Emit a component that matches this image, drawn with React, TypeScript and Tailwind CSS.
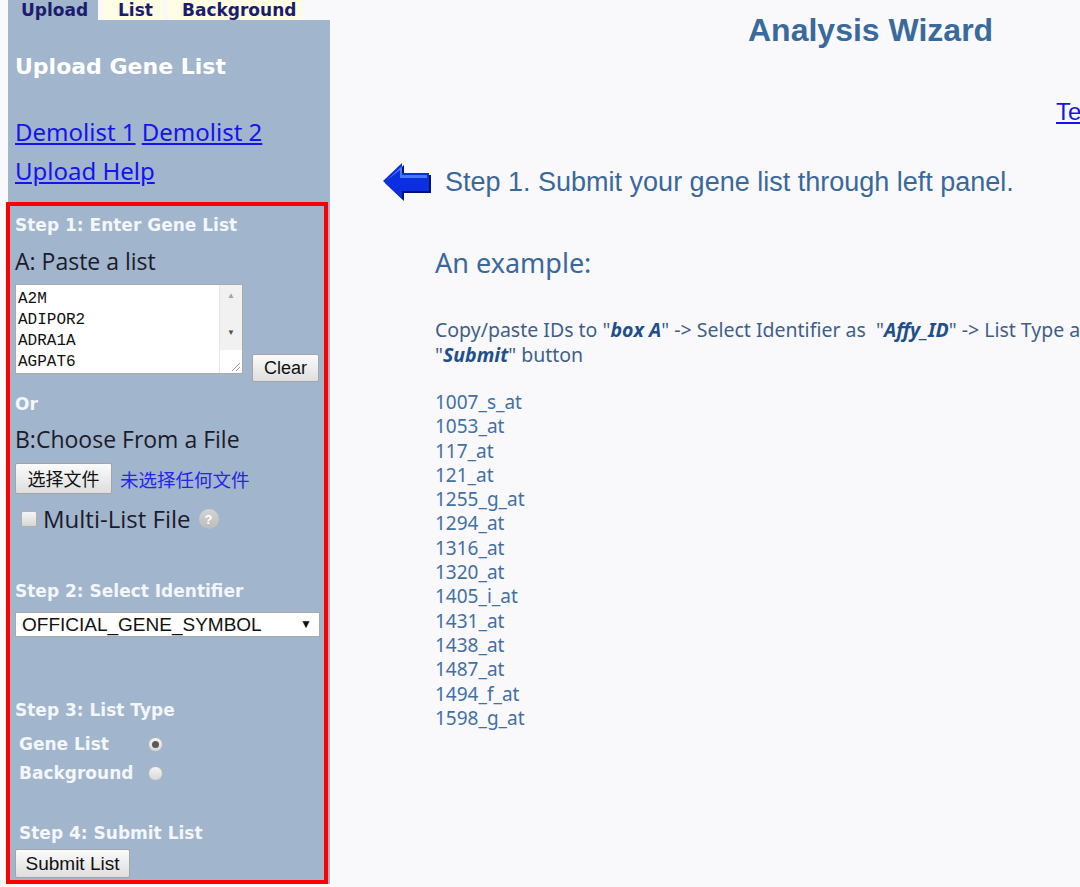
import React from 'react';

const ids = [
  '1007_s_at', '1053_at', '117_at', '121_at', '1255_g_at', '1294_at', '1316_at',
  '1320_at', '1405_i_at', '1431_at', '1438_at', '1487_at', '1494_f_at', '1598_g_at',
];

const bold = { fontFamily: '"DejaVu Sans", Verdana, sans-serif' };
const tahoma = { fontFamily: '"Noto Sans", "DejaVu Sans", sans-serif' };
const segoe = { fontFamily: '"Open Sans", "Noto Sans", sans-serif' };
const arial = { fontFamily: '"Liberation Sans", Arial, sans-serif' };
const cjk = { fontFamily: '"Noto Sans CJK SC", "Noto Sans", sans-serif' };

const BackArrow = () => (
  <svg width="50" height="40" viewBox="0 0 50 40" className="shrink-0">
    <polygon points="3,21 22,3 22,13 49,13 49,31 22,31 22,39" fill="#00156b" />
    <polygon points="1,19 20,1 20,11 47,11 47,29 20,29 20,37" fill="#0a2fe0" />
    <polygon points="4,19 20,4 20,13 45,13 45,16 18,16 18,8" fill="#4a78ff" />
  </svg>
);

const Radio = ({ checked }: { checked?: boolean }) => (
  <span className="flex h-[15px] w-[15px] items-center justify-center rounded-full border border-[#b4b4b4] bg-gradient-to-b from-[#f4f4f4] to-[#d8d8d8]">
    {checked && <span className="h-[7px] w-[7px] rounded-full bg-[#5a5a5a]" />}
  </span>
);

const StepTitle = ({ children, className = '' }: { children: React.ReactNode; className?: string }) => (
  <div style={bold} className={`text-[17px] font-bold leading-[20px] text-[#f3f6fa] ${className}`}>
    {children}
  </div>
);

const App: React.FC = () => {
  return (
    <div className="flex h-[887px] w-[1080px] overflow-hidden bg-[#f9f9fb]">
      {/* Left panel */}
      <div className="flex w-[330px] shrink-0 flex-col pl-2">
        <div style={bold} className="flex h-5 items-stretch gap-[5px] text-[17px] font-bold leading-5 text-[#1c1c6e]">
          <div className="w-[90px] bg-[#a1b5cc] pl-[13px]">Upload</div>
          <div className="w-[60px] bg-[#fffde3] pl-[15px]">List</div>
          <div className="w-[134px] bg-[#fffde3] pl-[14px]">Background</div>
        </div>

        <div className="flex h-[864px] flex-col bg-[#a1b5cc] pl-[7px]">
          <h2 style={bold} className="mt-[34px] text-[22px] font-bold leading-[26px] text-white">Upload Gene List</h2>
          <div style={tahoma} className="mt-[39px] text-[24px] leading-[26px] text-[#1414ee]">
            <a className="underline" href="#">Demolist 1</a>{' '}
            <a className="underline" href="#">Demolist 2</a>
          </div>
          <div style={tahoma} className="mt-[13px] text-[24px] leading-[26px] text-[#1414ee]">
            <a className="underline" href="#">Upload Help</a>
          </div>

          {/* Steps box */}
          <div className="ml-[-9px] mt-[18px] flex h-[684px] w-[322px] flex-col border-4 border-[#ff0000] pl-[5px]">
            <StepTitle className="mt-[9px]">Step 1: Enter Gene List</StepTitle>
            <div style={segoe} className="mt-[12px] text-[23px] leading-[28px] text-[#1b1b2b]">A: Paste a list</div>

            <div className="mt-[9px] flex items-start gap-[9px]">
              <div className="flex h-[90px] w-[228px] border border-[#a9a9a9] bg-white">
                <div
                  style={{ fontFamily: '"Liberation Mono", "Courier New", monospace' }}
                  className="flex-1 overflow-hidden whitespace-pre pl-[2px] pt-[4px] text-[16px] leading-[21px] text-[#111]"
                >
                  {'A2M\nADIPOR2\nADRA1A\nAGPAT6'}
                </div>
                <div className="flex w-[23px] flex-col border-l border-[#e6e6e6]">
                  <div className="flex h-[65px] flex-col items-center bg-[#f1f1f1] text-[#a3a3a3]">
                    <span className="mt-[5px] text-[8px] leading-[10px]">▲</span>
                    <span className="mt-[27px] text-[8px] leading-[10px] text-[#505050]">▼</span>
                  </div>
                  <div className="flex flex-1 items-end justify-end bg-white p-[2px]">
                    <svg width="10" height="10" viewBox="0 0 10 10">
                      <line x1="2" y1="10" x2="10" y2="2" stroke="#9a9a9a" strokeWidth="1" />
                      <line x1="6" y1="10" x2="10" y2="6" stroke="#9a9a9a" strokeWidth="1" />
                    </svg>
                  </div>
                </div>
              </div>
              <button
                style={arial}
                className="mt-[70px] h-[28px] w-[67px] rounded-[2px] border border-[#a5a5a5] bg-gradient-to-b from-[#fbfbfb] to-[#dedede] text-[18px] leading-[26px] text-[#111]"
              >
                Clear
              </button>
            </div>

            <StepTitle className="mt-[12px]">Or</StepTitle>
            <div style={segoe} className="mt-[11px] text-[23px] leading-[28px] text-[#1b1b2b]">B:Choose From a File</div>

            <div className="mt-[10px] flex items-center gap-[8px]">
              <button
                style={cjk}
                className="h-[31px] w-[97px] rounded-[2px] border border-[#a5a5a5] bg-gradient-to-b from-[#fbfbfb] to-[#dedede] text-[18px] leading-[29px] text-[#111]"
              >
                选择文件
              </button>
              <span style={cjk} className="text-[18.5px] leading-[28px] text-[#2424ee]">未选择任何文件</span>
            </div>

            <div className="mt-[11px] flex h-[28px] items-center">
              <span className="ml-[6px] h-[16px] w-[16px] rounded-[2px] border border-[#b0b0b0] bg-gradient-to-b from-[#f6f6f6] to-[#d6d6d6]" />
              <span style={segoe} className="ml-[6px] text-[24px] leading-[28px] text-[#1b1b2b]">Multi-List File</span>
              <span className="ml-[8px] flex h-[20px] w-[20px] items-center justify-center rounded-full bg-gradient-to-b from-[#d4d4d4] to-[#bcbcbc] text-[13px] font-bold leading-none text-white" style={arial}>
                ?
              </span>
            </div>

            <StepTitle className="mt-[48px]">Step 2: Select Identifier</StepTitle>
            <div
              style={arial}
              className="mt-[11px] flex h-[25px] w-[305px] items-center justify-between border border-[#a9a9a9] bg-white pl-[6px] pr-[7px] text-[19px] leading-[23px] text-[#111]"
            >
              <span>OFFICIAL_GENE_SYMBOL</span>
              <span className="text-[12px]">▼</span>
            </div>

            <StepTitle className="mt-[63px]">Step 3: List Type</StepTitle>
            <div className="mt-[10px] flex flex-col pl-[4px]">
              <div className="flex h-[29px] items-center">
                <span style={bold} className="w-[129px] text-[17px] font-bold text-[#f3f6fa]">Gene List</span>
                <Radio checked />
              </div>
              <div className="flex h-[29px] items-center">
                <span style={bold} className="w-[129px] text-[17px] font-bold text-[#f3f6fa]">Background</span>
                <Radio />
              </div>
            </div>

            <StepTitle className="mt-[35px] pl-[4px]">Step 4: Submit List</StepTitle>
            <button
              style={arial}
              className="mt-[6px] h-[29px] w-[115px] rounded-[2px] border border-[#a5a5a5] bg-gradient-to-b from-[#fbfbfb] to-[#dedede] text-[19px] leading-[27px] text-[#111]"
            >
              Submit List
            </button>
          </div>
        </div>
      </div>

      {/* Right content */}
      <div className="flex min-w-0 flex-1 flex-col">
        <h1 style={arial} className="mt-[12px] whitespace-nowrap pl-[418px] text-[32px] font-bold leading-[37px] text-[#3a6a9c]">
          Analysis Wizard
        </h1>
        <div style={arial} className="mt-[49px] whitespace-nowrap pl-[726px] text-[24px] leading-[28px]">
          <a href="#" className="text-[#1414ee] underline">Tell us how you like the tool</a>
        </div>

        <div className="mt-[36px] flex items-center gap-[13px] pl-[52px]">
          <BackArrow />
          <span style={arial} className="whitespace-nowrap text-[27px] leading-[32px] text-[#3b689a]">
            Step 1. Submit your gene list through left panel.
          </span>
        </div>

        <div style={tahoma} className="mt-[43px] pl-[105px] text-[27px] leading-[36px] text-[#3b689a]">
          An example:
        </div>

        <div style={tahoma} className="mt-[36px] whitespace-nowrap pl-[105px] text-[19.5px] leading-[25px] text-[#3f5f8a]">
          Copy/paste IDs to "<b className="italic text-[#1f4f8c]">box A</b>" -&gt; Select Identifier as&nbsp; "
          <b className="italic text-[#1f4f8c]">Affy_ID</b>" -&gt; List Type as "<b className="italic text-[#1f4f8c]">Gene List</b>" -&gt; Click
          <br />"<b className="italic text-[#1f4f8c]">Submit</b>" button
        </div>

        <div style={tahoma} className="mt-[23px] flex flex-col pl-[105px] text-[19px] leading-[24.3px] text-[#4470a3]">
          {ids.map((id) => (
            <span key={id}>{id}</span>
          ))}
        </div>
      </div>
    </div>
  );
};

export default App;
